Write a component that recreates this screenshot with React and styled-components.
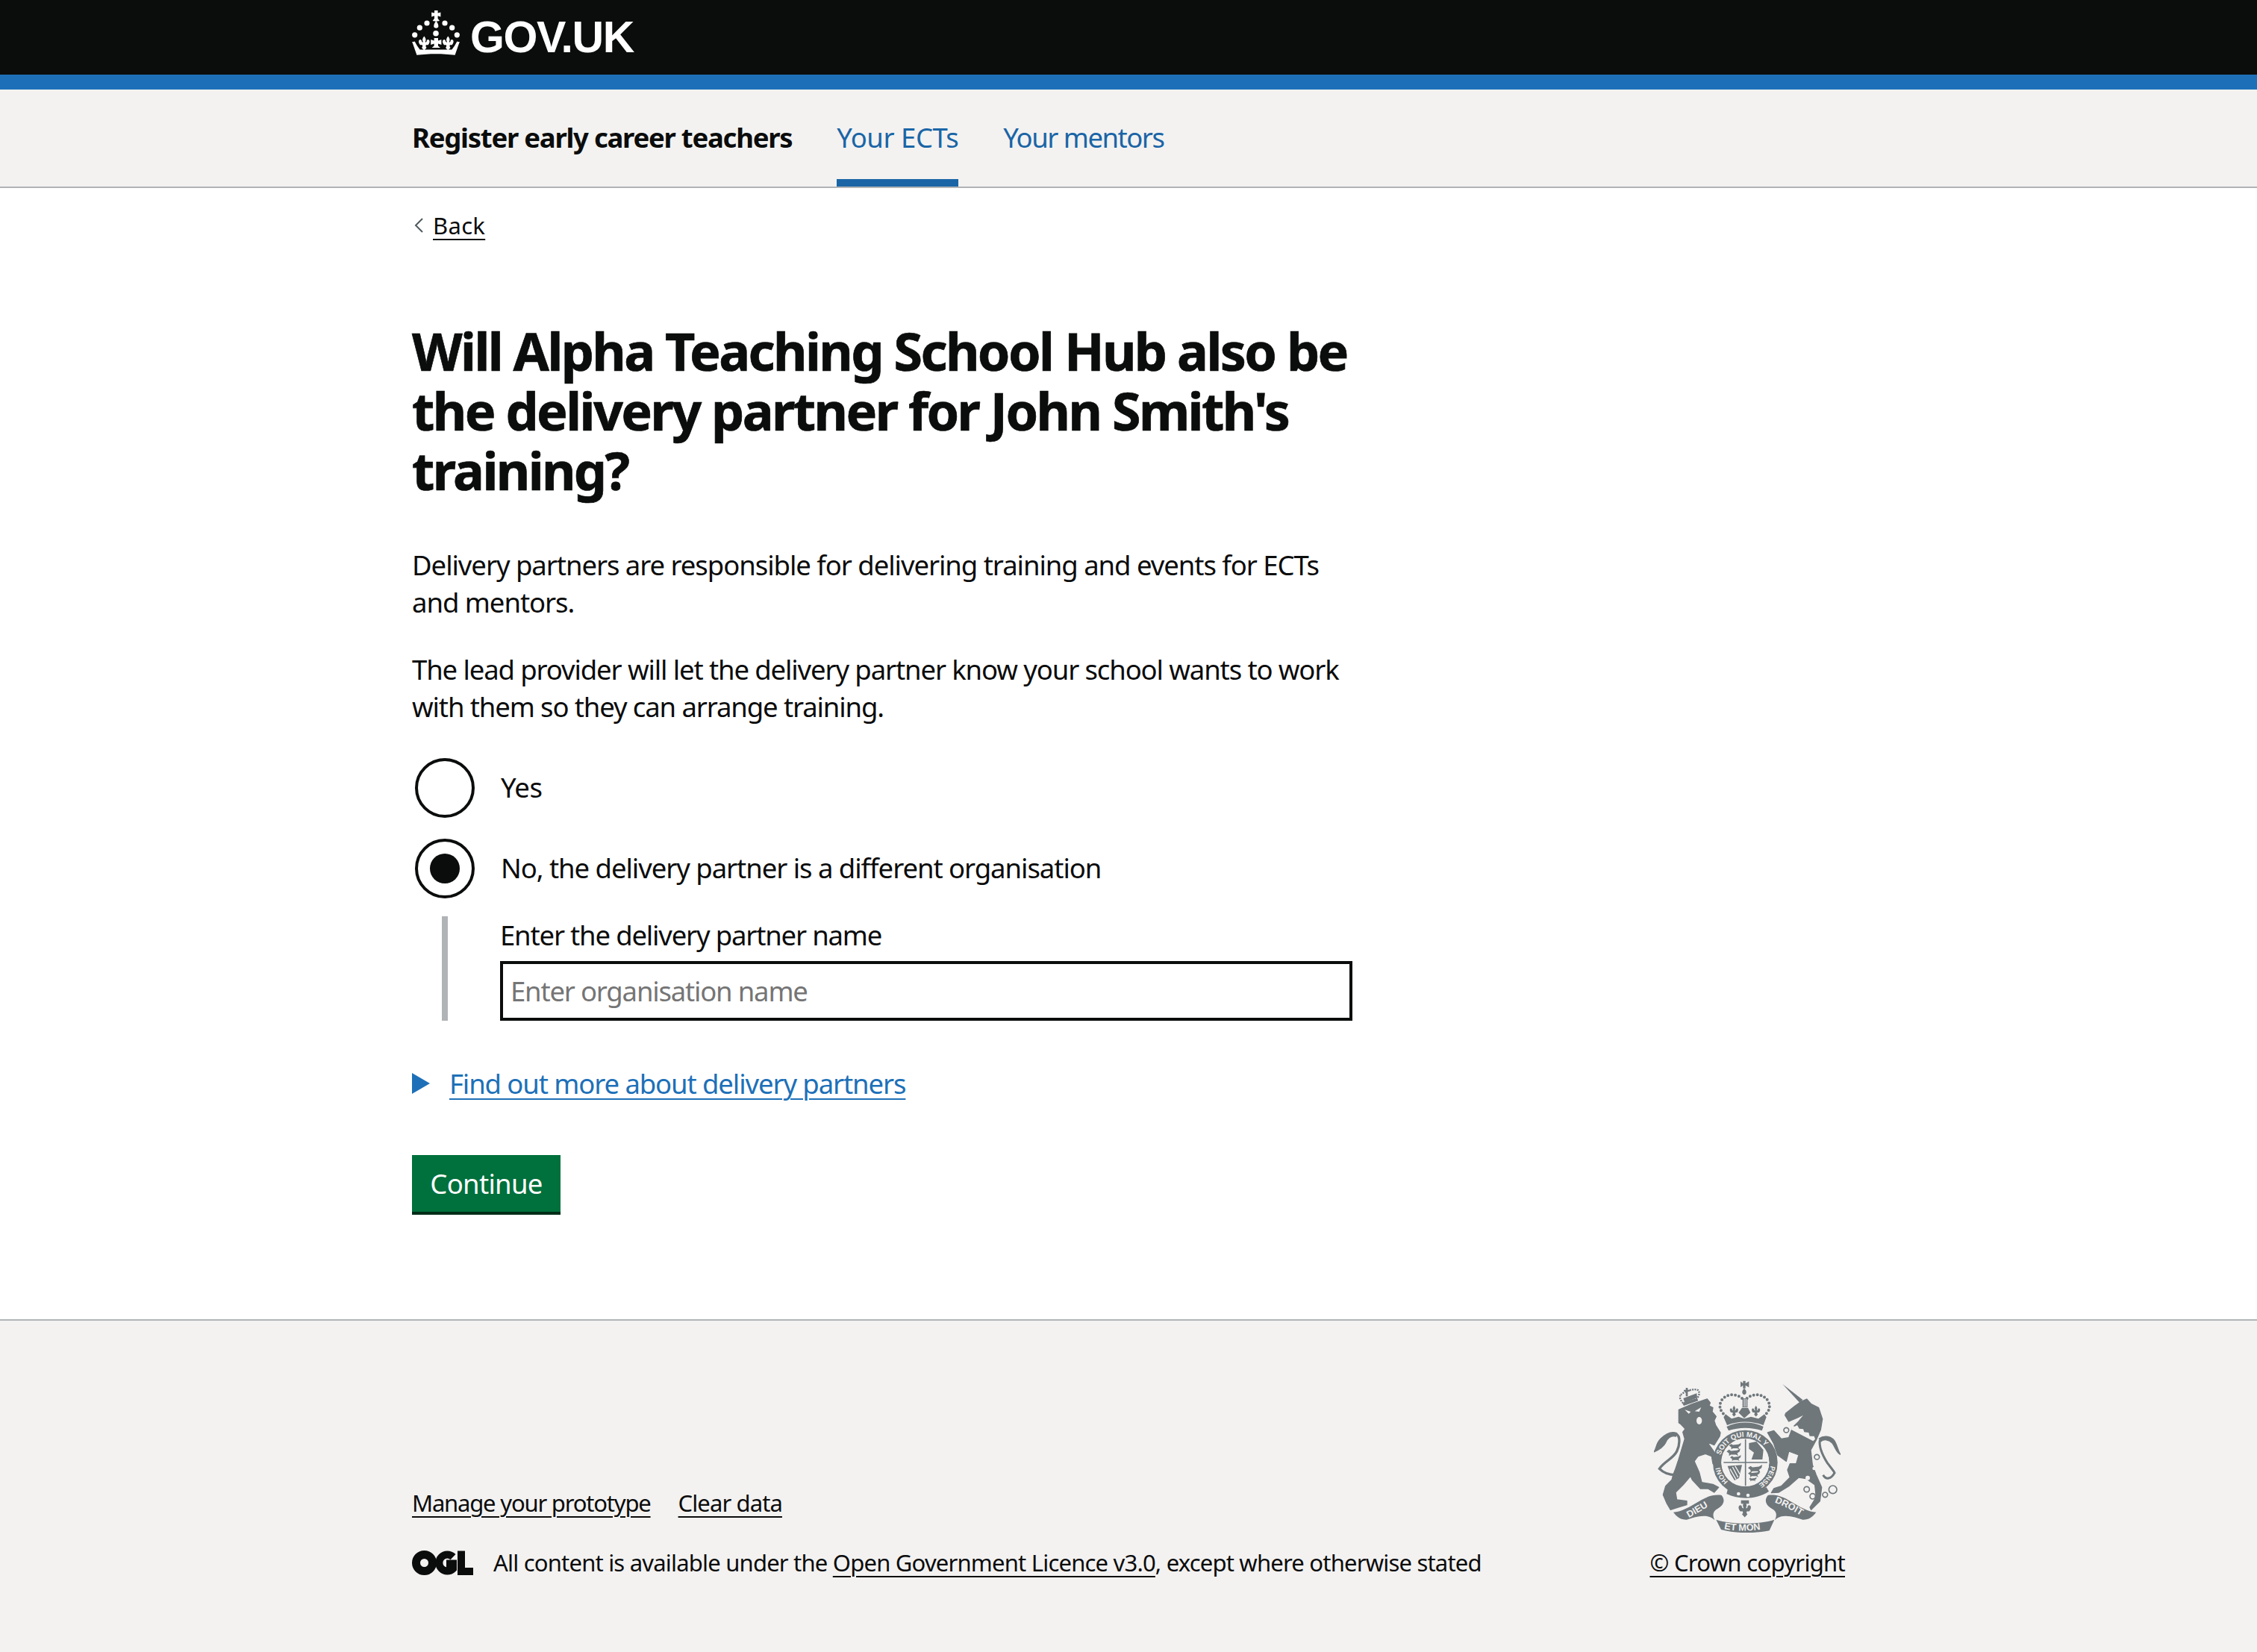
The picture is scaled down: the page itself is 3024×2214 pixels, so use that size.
import React from 'react'
import styled, { createGlobalStyle } from 'styled-components'

const FONT = `"Noto Sans", "Liberation Sans", Arial, sans-serif`
const INK = '#0b0c0c'
const CREST = '#6f777b'
const FOOT_BG = '#f3f2f1'

const Global = createGlobalStyle`
  html, body { margin: 0; padding: 0; background: #fff; }
  body { font-family: ${FONT}; color: ${INK}; font-size: 36.5px; letter-spacing: -1.05px; }
  * { box-sizing: border-box; }
`

const Wrap = styled.div`
  width: 1920px;
  margin: 0 auto;
`

/* header */
const TopBar = styled.header`
  height: 120px;
  background: ${INK};
  border-bottom: 20px solid #1d70b8;
`
const LogoRow = styled.div`
  display: flex;
  align-items: flex-start;
  height: 100px;
  padding-top: 14px;
`
const LogoText = styled.span`
  font-family: "Liberation Sans", Arial, sans-serif;
  font-weight: 700;
  font-size: 59px;
  line-height: 60px;
  letter-spacing: -1.4px;
  color: #fff;
  margin: 6px 0 0 14px;
`

/* service nav */
const ServiceNav = styled.nav`
  height: 132px;
  background: ${FOOT_BG};
  border-bottom: 2px solid #b1b4b6;
`
const NavRow = styled.div`
  display: flex;
  gap: 60px;
  height: 130px;
`
const ServiceName = styled.span`
  font-weight: 700;
  line-height: 128px;
  letter-spacing: -1.25px;
`
const NavItem = styled.a`
  display: block;
  line-height: 128px;
  height: 130px;
  color: #1a65a6;
  border-bottom: ${p => (p.$active ? '10px solid #1a65a6' : 'none')};
  letter-spacing: ${p => p.$ls};
`

/* main */
const BackLink = styled.a`
  display: flex;
  align-items: center;
  gap: 13px;
  margin-top: 30px;
  height: 40px;
  font-size: 31px;
  line-height: 40px;
  color: ${INK};
  padding-left: 3px;
`
const Uline = styled.span`
  text-decoration: underline;
  text-decoration-thickness: 2px;
  text-underline-offset: 6px;
  letter-spacing: ${p => p.$ls || 'inherit'};
`
const Heading = styled.h1`
  margin: 108px 0 62px;
  width: 1300px;
  font-size: 70px;
  line-height: 80px;
  font-weight: 700;
  letter-spacing: -2.6px;
  -webkit-text-stroke: 0.7px ${INK};
`
const Para = styled.p`
  margin: 0 0 40px;
  width: 1280px;
  line-height: 50px;
  letter-spacing: ${p => p.$ls || 'inherit'};
`
const RadioItem = styled.div`
  display: flex;
  align-items: center;
  gap: 35px;
  height: 88px;
  padding-left: 4px;
  margin-bottom: 20px;
`
const RadioMark = styled.span`
  display: flex;
  align-items: center;
  justify-content: center;
  flex: none;
  width: 80px;
  height: 80px;
  border: 4px solid ${INK};
  border-radius: 50%;
  &::after {
    content: '';
    display: ${p => (p.$checked ? 'block' : 'none')};
    width: 40px;
    height: 40px;
    border-radius: 50%;
    background: ${INK};
  }
`
const RadioLabel = styled.span`
  margin-top: -2px;
  letter-spacing: ${p => p.$ls || 'inherit'};
`
const Conditional = styled.div`
  margin-left: 40px;
  width: 1260px;
  height: 140px;
  border-left: 8px solid #b1b4b6;
  padding-left: 70px;
`
const CondLabel = styled.label`
  display: block;
  line-height: 50px;
  margin-bottom: 10px;
  letter-spacing: -1.18px;
`
const TextInput = styled.input`
  display: block;
  width: 1142px;
  height: 80px;
  border: 4px solid ${INK};
  border-radius: 0;
  padding: 0 10px;
  background: #fff;
  font-family: ${FONT};
  font-size: 36.5px;
  letter-spacing: -1.2px;
  &::placeholder { color: #757575; opacity: 1; }
`
const Details = styled.div`
  display: flex;
  align-items: center;
  gap: 26px;
  margin-top: 59px;
  height: 50px;
  line-height: 46px;
  letter-spacing: -1.1px;
  color: #1d70b8;
`
const Triangle = styled.span`
  flex: none;
  width: 0;
  height: 0;
  border-style: solid;
  border-width: 14px 0 14px 24px;
  border-color: transparent transparent transparent #1d70b8;
`
const Button = styled.button`
  display: block;
  margin: 71px 0 144px;
  width: 199px;
  height: 76px;
  padding: 0;
  border: 0;
  border-radius: 0;
  background: #00703c;
  box-shadow: 0 4px 0 #002d18;
  color: #fff;
  font-family: ${FONT};
  font-size: 36.5px;
  letter-spacing: -0.7px;
  line-height: 76px;
`

/* footer */
const Footer = styled.footer`
  height: 446px;
  background: ${FOOT_BG};
  border-top: 2px solid #b1b4b6;
  padding-top: 80px;
`
const FootRow = styled.div`
  display: flex;
  justify-content: space-between;
  align-items: flex-end;
`
const FootLeft = styled.div`
  font-size: 31px;
  line-height: 40px;
  letter-spacing: -0.8px;
`
const FootLinks = styled.div`
  display: flex;
  gap: 37px;
  margin-bottom: 40px;
`
const LicenceRow = styled.div`
  display: flex;
  align-items: center;
  gap: 27px;
  height: 40px;
`
const FootRight = styled.div`
  display: flex;
  flex-direction: column;
  align-items: center;
  font-size: 31px;
  line-height: 40px;
  letter-spacing: -0.7px;
`
const CrestBox = styled.div`
  width: 250px;
  height: 204px;
  margin-bottom: 20px;
`

const Fleur = ({ x, y, s = 1 }) => (
  <path
    transform={`translate(${x} ${y}) scale(${s})`}
    d="M0,-11 C2.4,-8 3,-6 1.7,-3.4 L1.7,-2 L3.5,-3.6 C3.2,-6 5.4,-7 7,-5.6 C8.4,-4 7.6,-1 5.6,1.4 L2.6,1.4 L2.2,3.2 L3.4,5.2 L0,9 L-3.4,5.2 L-2.2,3.2 L-2.6,1.4 L-5.6,1.4 C-7.6,-1 -8.4,-4 -7,-5.6 C-5.4,-7 -3.2,-6 -3.5,-3.6 L-1.7,-2 L-1.7,-3.4 C-3,-6 -2.4,-8 0,-11 Z"
  />
)

const Leo = ({ x, y, s = 1 }) => (
  <path
    transform={`translate(${x} ${y}) scale(${s})`}
    d="M0,0 L8,-6 L14,-2 L34,-4 L44,-10 L42,0 L34,6 L38,14 L30,10 L14,10 L8,14 L8,6 Z"
  />
)

const CrownLogo = () => (
  <svg width="64" height="60" viewBox="0 0 64 60" fill="#fff">
    <path d="M30,0 H34.6 V3.6 L38.4,2.4 V8.4 L34.6,7.2 V10.8 L37,14 L32.3,14.8 L27.6,14 L30,10.8 V7.2 L26.2,8.4 V2.4 L30,3.6 Z" />
    <path d="M32.3,14 C35.4,18 35.8,21 35,22.6 C34,24 30.6,24 29.6,22.6 C28.8,21 29.2,18 32.3,14 Z" />
    <circle cx="20" cy="17" r="3.6" />
    <circle cx="44" cy="17" r="3.6" />
    <circle cx="10.3" cy="23.2" r="3.6" />
    <circle cx="53.7" cy="23.2" r="3.6" />
    <circle cx="3.7" cy="32.8" r="3.6" />
    <circle cx="60.3" cy="32.8" r="3.6" />
    <circle cx="32" cy="30.8" r="3.8" />
    <Fleur x={16.3} y={45} s={0.95} />
    <Fleur x={48.3} y={45} s={0.95} />
    <path d="M29.6,37 H35 V40.6 L39.4,39 V46 L35,44.6 V47.6 L38,50 H26.6 L29.6,47.6 V44.6 L25.2,46 V39 L29.6,40.6 Z" />
    <path d="M0.4,42.4 L3.6,41.4 L7,47.6 L10.6,52.4 L53.4,52.4 L57,47.6 L60.4,41.4 L63.6,42.4 L57.6,59.8 C42,57.6 22,57.6 6.4,59.8 Z" />
    <path d="M0,42 L5,44 L3,47 Z M64,42 L59,44 L61,47 Z" />
  </svg>
)

const OglLogo = () => (
  <svg width="82" height="33" viewBox="0 0 82 33" fill="none">
    <circle cx="16.5" cy="16.5" r="11" stroke={INK} strokeWidth="11" />
    <path d="M55,8.6 A11,11 0 1 0 55,24.4 L55,17.5 L46,17.5" stroke={INK} strokeWidth="10" />
    <path d="M61,0.6 H71 V23 H82 V33 H61 Z" fill={INK} />
  </svg>
)

/* drawn in the coordinates of a 3x crop of the crest */
const Crest = () => (
  <svg width="250" height="204" viewBox="108 60 750 612" fill={CREST}>
    <defs>
      <path id="ringTop" d="M375.5,363.3 A103,103 0 0 1 574.5,363.3" />
      <path id="ringRight" d="M577.6,399 A103,103 0 0 1 518.5,483.3" />
      <path id="ringLeft" d="M408.8,468.9 A103,103 0 0 1 372.4,399" />
      <path id="bandLeft" d="M246,614 C280,596 320,570 356,550" />
      <path id="bandMid" d="M386,656 C430,668 520,668 566,652" />
      <path id="bandRight" d="M590,550 C626,562 680,590 716,616" />
    </defs>

    {/* lion */}
    <g stroke={CREST} strokeWidth="4" strokeLinejoin="round">
      <path d="M208,178 L262,155 L322,135 L334,150 L330,162 L345,170 L342,186 L358,205 L350,222 L356,240 L375,270 L372,285 L350,320 L322,308 L348,345 L380,405 L368,420 L345,395 L340,365 L315,355 L285,365 L270,385 L290,430 L300,470 L345,478 L368,490 L350,510 L325,495 L295,495 L262,460 L255,445 L225,480 L195,510 L200,540 L240,545 L240,560 L205,570 L175,580 L160,555 L145,520 L155,485 L180,460 L185,440 L195,415 L205,385 L232,295 L224,268 L234,255 L215,235 L208,230 Z" />
      <path d="M108,348 C120,330 115,315 135,295 C150,280 175,262 200,272 L196,285 C175,280 160,295 155,310 C145,330 125,340 108,348 Z" />
    </g>
    <path d="M198,276 C215,285 212,320 200,345 C185,375 150,385 130,415 C150,435 175,440 195,440" fill="none" stroke={CREST} strokeWidth="10" />
    <path d="M232,178 L256,186 L248,194 Z M272,184 L298,168 L290,186 Z" fill={FOOT_BG} />
    <ellipse cx="290" cy="222" rx="11" ry="15" fill={FOOT_BG} />
    {/* lion's crown */}
    <path d="M222,152 L282,132 L286,142 L228,162 Z" />
    <path d="M216,118 C230,104 270,90 286,100 C294,110 288,125 282,132 L226,152 C216,142 208,128 216,118 Z" fill="none" stroke={CREST} strokeWidth="7" strokeDasharray="6 4" />
    <path d="M236,90 H244 V98 H252 V104 H244 V124 H236 V104 H228 V98 H236 Z" />
    <path d="M226,132 L280,112 L282,130 L232,150 Z" />

    {/* unicorn */}
    <path d="M625,75 L706,138 L694,150 Z" />
    <g stroke={CREST} strokeWidth="4" strokeLinejoin="round">
      <path d="M638,192 L672,165 L700,145 L722,135 L740,155 L770,170 L785,215 L778,258 L760,300 L738,340 L745,400 L760,440 L782,490 L775,545 L740,580 L735,570 L760,530 L755,480 L720,455 L690,450 L650,485 L610,510 L580,512 L590,495 L620,485 L655,450 L645,420 L655,395 L680,395 L690,360 L650,345 L640,385 L605,360 L590,315 L565,270 L590,262 L620,295 L650,290 L665,250 L690,225 L715,195 L685,210 L650,225 L635,200 Z" />
      <path d="M858,358 C840,350 838,330 825,312 C810,296 790,296 778,306 L772,294 C790,280 815,284 830,298 C845,315 845,340 858,358 Z" />
    </g>
    <path d="M775,300 C770,330 785,360 805,392 C820,412 832,425 834,432 C820,456 800,462 788,440" fill="none" stroke={CREST} strokeWidth="9" />
    <path d="M664,238 L672,246 L684,240 L692,254 L708,256 L712,268 L730,270 L734,284 L752,284 L756,296 L748,304 L660,258 Z" fill={FOOT_BG} />
    <g fill={FOOT_BG}>
      <circle cx="726" cy="452" r="9" />
      <circle cx="752" cy="414" r="7" />
    </g>
    <g fill="none" stroke={CREST} strokeWidth="5">
      <circle cx="640" cy="260" r="10" />
      <circle cx="628" cy="344" r="12" />
      <circle cx="763" cy="368" r="10" />
      <circle cx="722" cy="498" r="11" />
      <circle cx="746" cy="526" r="11" />
      <circle cx="796" cy="520" r="10" />
      <circle cx="827" cy="499" r="16" />
    </g>

    {/* royal crown */}
    <path d="M466,62 H476 V72 L490,64 V88 L476,80 V92 H466 V80 L456,88 V64 L466,72 Z" />
    <path d="M471,92 C482,102 482,114 471,118 C460,114 460,102 471,92 Z" />
    <g fill="none" stroke={CREST} strokeWidth="12" strokeLinecap="round" strokeDasharray="0 15">
      <path d="M462,132 C440,112 400,112 380,140 C366,165 376,185 392,198" />
      <path d="M482,132 C505,112 545,112 565,140 C580,165 570,185 555,198" />
    </g>
    <path d="M464,132 H484 V168 H464 Z" />
    <path d="M471,134 V166 M478,134 V166" stroke={FOOT_BG} strokeWidth="3" />
    <Fleur x={430} y={186} s={2.2} />
    <Fleur x={518} y={186} s={2.2} />
    <path d="M462,170 H486 L496,190 L471,212 L448,190 Z" />
    <path d="M388,208 L396,196 L420,214 L448,206 L471,214 L498,206 L528,214 L552,196 L560,208 L548,240 C500,222 448,222 402,240 Z" />
    <path d="M400,246 C445,224 505,224 548,246 L542,262 C500,248 450,248 408,262 Z" />

    {/* garter */}
    <circle cx="475" cy="390" r="113" fill="none" stroke={CREST} strokeWidth="34" />
    <circle cx="475" cy="390" r="96" fill={FOOT_BG} />
    <g fontFamily={`"Liberation Sans", Arial, sans-serif`} fontWeight="700" fill={FOOT_BG} letterSpacing="0">
      <text fontSize="29"><textPath href="#ringTop" startOffset="1%">SOIT QUI MAL Y</textPath></text>
      <text fontSize="27"><textPath href="#ringRight" startOffset="4%">PENSE</textPath></text>
      <text fontSize="27"><textPath href="#ringLeft" startOffset="4%">HONI</textPath></text>
    </g>

    {/* shield */}
    <path d="M388,390 H564 M476,296 V484" stroke={CREST} strokeWidth="5" />
    <g>
      <Leo x={410} y={322} s={1.1} />
      <Leo x={400} y={346} s={1.25} />
      <Leo x={414} y={370} s={1} />
      <path d="M490,312 L520,306 L548,340 L544,378 L500,378 L510,350 L490,335 Z" />
      <Leo x={486} y={412} s={1.3} />
      <Leo x={486} y={434} s={1.1} />
      <Leo x={490} y={456} s={0.7} />
    </g>
    <path d="M404,404 L462,400 L450,452 L432,462 L416,436 Z" />
    <path d="M424,408 L446,450 M414,416 L438,458 M434,404 L454,438" stroke={FOOT_BG} strokeWidth="4" />

    {/* band below shield */}
    <path d="M405,496 C460,520 510,518 560,490 L570,506 C520,540 450,540 400,516 Z" />
    <g fill={FOOT_BG}>
      <circle cx="448" cy="516" r="7" />
      <circle cx="486" cy="522" r="7" />
    </g>

    {/* motto */}
    <path d="M186,590 C215,590 250,570 300,540 C330,522 360,518 380,522 C395,540 390,560 365,575 C345,585 342,600 352,622 C330,600 300,600 240,620 C215,622 198,606 186,590 Z" />
    <path transform="translate(946 0) scale(-1 1)" d="M186,590 C215,590 250,570 300,540 C330,522 360,518 380,522 C395,540 390,560 365,575 C345,585 342,600 352,622 C330,600 300,600 240,620 C215,622 198,606 186,590 Z" />
    <path d="M358,620 C420,640 530,640 592,620 L572,664 C510,676 440,676 378,660 Z" />
    <Fleur x={473} y={582} s={3.2} />
    <path d="M458,542 H490 V556 H458 Z" />
    <g fontFamily={`"Liberation Sans", Arial, sans-serif`} fontWeight="700" fill={FOOT_BG} fontSize="38" letterSpacing="0">
      <text><textPath href="#bandLeft" startOffset="2%">DIEU</textPath></text>
      <text><textPath href="#bandMid" startOffset="2%">ET MON</textPath></text>
      <text><textPath href="#bandRight" startOffset="2%">DROIT</textPath></text>
    </g>
  </svg>
)

const App = () => (
  <>
    <Global />
    <TopBar>
      <Wrap>
        <LogoRow>
          <CrownLogo />
          <LogoText>GOV.UK</LogoText>
        </LogoRow>
      </Wrap>
    </TopBar>

    <ServiceNav>
      <Wrap>
        <NavRow>
          <ServiceName>Register early career teachers</ServiceName>
          <NavItem $active $ls="-0.45px">Your ECTs</NavItem>
          <NavItem $ls="-1.5px">Your mentors</NavItem>
        </NavRow>
      </Wrap>
    </ServiceNav>

    <Wrap as="main">
      <BackLink>
        <svg width="12" height="20" viewBox="0 0 12 20" fill="none">
          <path d="M11,1 L2,10 L11,19" stroke="#505a5f" strokeWidth="2" />
        </svg>
        <Uline $ls="0.3px">Back</Uline>
      </BackLink>

      <Heading>Will Alpha Teaching School Hub also be the delivery partner for John Smith's training?</Heading>

      <Para>Delivery partners are responsible for delivering training and events for ECTs and mentors.</Para>
      <Para $ls="-1.12px">The lead provider will let the delivery partner know your school wants to work with them so they can arrange training.</Para>

      <RadioItem>
        <RadioMark />
        <RadioLabel $ls="-0.5px">Yes</RadioLabel>
      </RadioItem>
      <RadioItem>
        <RadioMark $checked />
        <RadioLabel>No, the delivery partner is a different organisation</RadioLabel>
      </RadioItem>
      <Conditional>
        <CondLabel>Enter the delivery partner name</CondLabel>
        <TextInput placeholder="Enter organisation name" readOnly />
      </Conditional>

      <Details>
        <Triangle />
        <Uline>Find out more about delivery partners</Uline>
      </Details>

      <Button>Continue</Button>
    </Wrap>

    <Footer>
      <Wrap>
        <FootRow>
          <FootLeft>
            <FootLinks>
              <Uline $ls="-1.2px">Manage your prototype</Uline>
              <Uline $ls="-0.9px">Clear data</Uline>
            </FootLinks>
            <LicenceRow>
              <OglLogo />
              <span>All content is available under the <Uline>Open Government Licence v3.0</Uline>, except where otherwise stated</span>
            </LicenceRow>
          </FootLeft>
          <FootRight>
            <CrestBox>
              <Crest />
            </CrestBox>
            <Uline>© Crown copyright</Uline>
          </FootRight>
        </FootRow>
      </Wrap>
    </Footer>
  </>
)

export default App
